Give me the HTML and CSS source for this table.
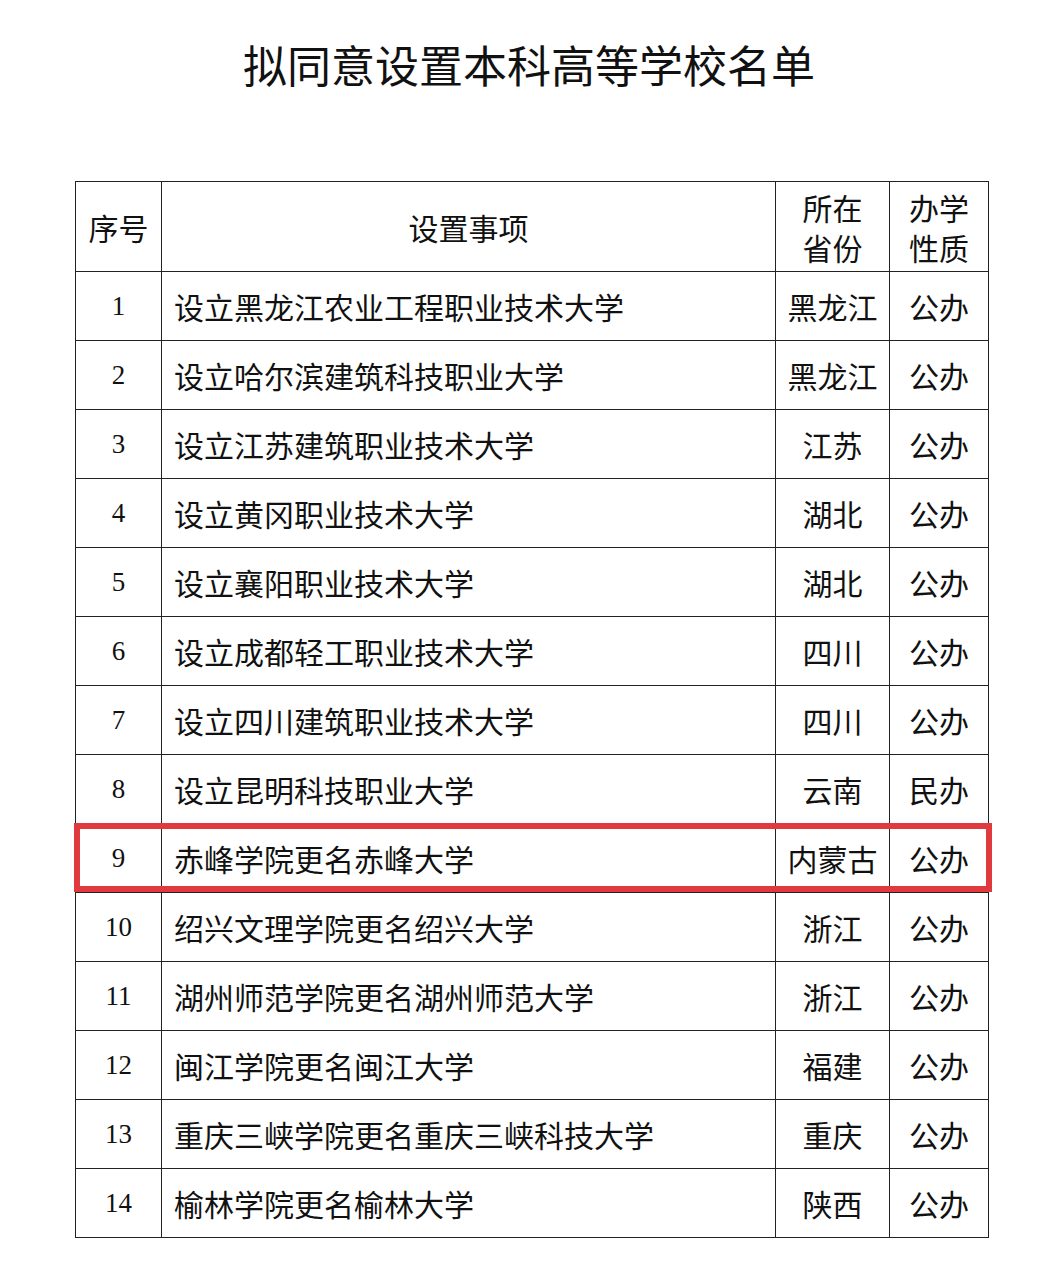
FILE: index.html
```html
<!DOCTYPE html>
<html lang="zh-CN">
<head>
<meta charset="utf-8">
<title>拟同意设置本科高等学校名单</title>
<link rel="stylesheet" href="styles.css">
</head>
<body>
<h1 class="title">拟同意设置本科高等学校名单</h1>
<div class="wrap">
<table class="list">
<colgroup>
<col class="c-no"><col class="c-item"><col class="c-prov"><col class="c-type">
</colgroup>
<thead>
<tr><th>序号</th><th>设置事项</th><th>所在<br>省份</th><th>办学<br>性质</th></tr>
</thead>
<tbody>
<tr><td class="no">1</td><td class="item">设立黑龙江农业工程职业技术大学</td><td>黑龙江</td><td>公办</td></tr>
<tr><td class="no">2</td><td class="item">设立哈尔滨建筑科技职业大学</td><td>黑龙江</td><td>公办</td></tr>
<tr><td class="no">3</td><td class="item">设立江苏建筑职业技术大学</td><td>江苏</td><td>公办</td></tr>
<tr><td class="no">4</td><td class="item">设立黄冈职业技术大学</td><td>湖北</td><td>公办</td></tr>
<tr><td class="no">5</td><td class="item">设立襄阳职业技术大学</td><td>湖北</td><td>公办</td></tr>
<tr><td class="no">6</td><td class="item">设立成都轻工职业技术大学</td><td>四川</td><td>公办</td></tr>
<tr><td class="no">7</td><td class="item">设立四川建筑职业技术大学</td><td>四川</td><td>公办</td></tr>
<tr><td class="no">8</td><td class="item">设立昆明科技职业大学</td><td>云南</td><td>民办</td></tr>
<tr><td class="no">9</td><td class="item">赤峰学院更名赤峰大学</td><td>内蒙古</td><td>公办</td></tr>
<tr><td class="no">10</td><td class="item">绍兴文理学院更名绍兴大学</td><td>浙江</td><td>公办</td></tr>
<tr><td class="no">11</td><td class="item">湖州师范学院更名湖州师范大学</td><td>浙江</td><td>公办</td></tr>
<tr><td class="no">12</td><td class="item">闽江学院更名闽江大学</td><td>福建</td><td>公办</td></tr>
<tr><td class="no">13</td><td class="item">重庆三峡学院更名重庆三峡科技大学</td><td>重庆</td><td>公办</td></tr>
<tr><td class="no">14</td><td class="item">榆林学院更名榆林大学</td><td>陕西</td><td>公办</td></tr>
</tbody>
</table>
<div class="highlight"></div>
</div>
</body>
</html>
```
FILE: styles.css
```css
html, body {
  margin: 0;
  padding: 0;
  background: #fff;
}
body {
  font-family: "Noto Sans CJK SC", "Noto Sans", sans-serif;
  color: #111;
  width: 1058px;
}
.title {
  margin: 0;
  padding-top: 36px;
  height: 181px;
  box-sizing: border-box;
  text-align: center;
  font-size: 44px;
  font-weight: 400;
  line-height: 56px;
}
.wrap {
  position: relative;
  margin-left: 75px;
  width: 913px;
}
.list {
  border-collapse: collapse;
  table-layout: fixed;
  width: 913px;
}
.c-no { width: 86px; }
.c-item { width: 614px; }
.c-prov { width: 114px; }
.c-type { width: 99px; }
.list th, .list td {
  border: 1px solid #222;
  padding: 0;
  font-weight: 400;
  font-size: 30px;
  text-align: center;
  vertical-align: middle;
}
.list th {
  height: 89px;
  line-height: 40px;
}
.list td {
  height: 68px;
  line-height: 40px;
}
.list td.no {
  font-family: "Liberation Serif", serif;
  font-size: 27px;
}
.list td.item {
  text-align: left;
  padding-left: 12px;
}
.highlight {
  position: absolute;
  left: -1px;
  top: 642px;
  width: 918px;
  height: 69px;
  border: 6px solid #e03a3f;
  box-sizing: border-box;
  pointer-events: none;
}
```
